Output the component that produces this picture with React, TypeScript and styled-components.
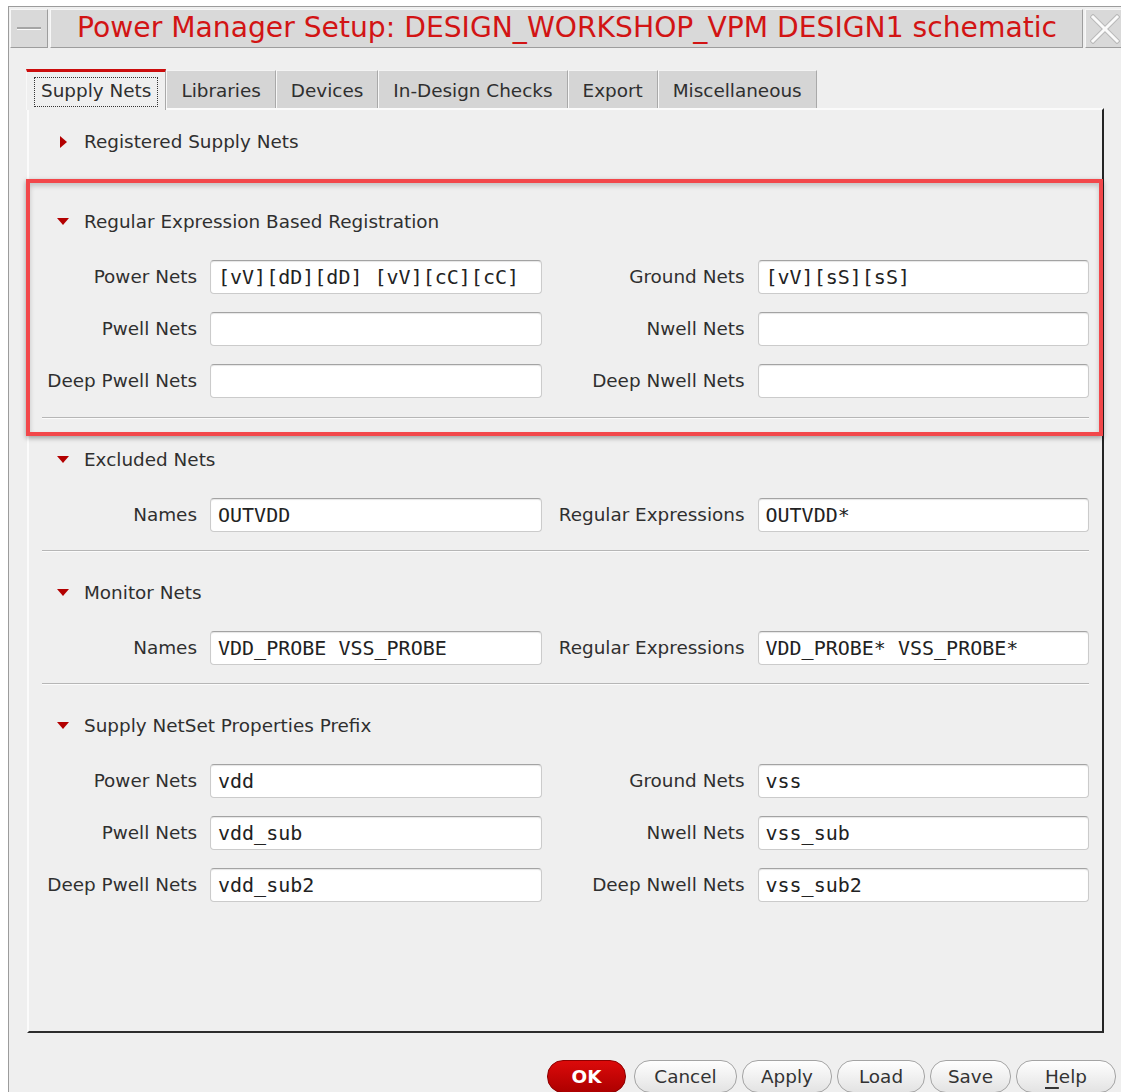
import React from 'react';
import styled, { createGlobalStyle } from 'styled-components';

const GlobalStyle = createGlobalStyle`
	html,
	body {
		margin: 0;
		padding: 0;
		background: #fff;
		overflow: hidden;
	}
	body {
		font-family: 'DejaVu Sans', 'Noto Sans', sans-serif;
	}
`;

type Field = { label: string; value: string };
type Row = [Field, Field];
type SectionData = { title: string; open: boolean; rows: Row[]; marked?: boolean };

const sections: SectionData[] = [
	{ title: 'Registered Supply Nets', open: false, rows: [] },
	{
		title: 'Regular Expression Based Registration',
		open: true,
		marked: true,
		rows: [
			[
				{ label: 'Power Nets', value: '[vV][dD][dD] [vV][cC][cC]' },
				{ label: 'Ground Nets', value: '[vV][sS][sS]' },
			],
			[
				{ label: 'Pwell Nets', value: '' },
				{ label: 'Nwell Nets', value: '' },
			],
			[
				{ label: 'Deep Pwell Nets', value: '' },
				{ label: 'Deep Nwell Nets', value: '' },
			],
		],
	},
	{
		title: 'Excluded Nets',
		open: true,
		rows: [
			[
				{ label: 'Names', value: 'OUTVDD' },
				{ label: 'Regular Expressions', value: 'OUTVDD*' },
			],
		],
	},
	{
		title: 'Monitor Nets',
		open: true,
		rows: [
			[
				{ label: 'Names', value: 'VDD_PROBE VSS_PROBE' },
				{ label: 'Regular Expressions', value: 'VDD_PROBE* VSS_PROBE*' },
			],
		],
	},
	{
		title: 'Supply NetSet Properties Prefix',
		open: true,
		rows: [
			[
				{ label: 'Power Nets', value: 'vdd' },
				{ label: 'Ground Nets', value: 'vss' },
			],
			[
				{ label: 'Pwell Nets', value: 'vdd_sub' },
				{ label: 'Nwell Nets', value: 'vss_sub' },
			],
			[
				{ label: 'Deep Pwell Nets', value: 'vdd_sub2' },
				{ label: 'Deep Nwell Nets', value: 'vss_sub2' },
			],
		],
	},
];

const tabs = ['Supply Nets', 'Libraries', 'Devices', 'In-Design Checks', 'Export', 'Miscellaneous'];

const buttons = [
	{ label: 'OK', width: 79, primary: true },
	{ label: 'Cancel', width: 103 },
	{ label: 'Apply', width: 90 },
	{ label: 'Load', width: 88 },
	{ label: 'Save', width: 81 },
	{ label: 'Help', width: 100, mnemonic: true },
];

// divider spacing below a section: none for the last, wider when it has no fields
const dividerGap = (rows: number) => (rows === 0 ? 25 : rows > 1 ? 19 : 18);

const Triangle = ({ open }: { open: boolean }) => (
	<TriangleSlot>
		{open ? (
			<svg width='12' height='8' viewBox='0 0 12 8'>
				<polygon points='0,0 12,0 6,7' fill='#b30000' />
			</svg>
		) : (
			<svg width='7' height='12' viewBox='0 0 7 12'>
				<polygon points='0,0 7,6 0,12' fill='#b30000' />
			</svg>
		)}
	</TriangleSlot>
);

const App = () => {
	return (
		<>
			<GlobalStyle />
			<Window>
				<TitleBar>
					<MinBox>
						<span />
					</MinBox>
					<TitleBox>Power Manager Setup: DESIGN_WORKSHOP_VPM DESIGN1 schematic</TitleBox>
					<CloseBox>
						<svg width='30' height='30' viewBox='0 0 30 30'>
							<g strokeLinecap='square'>
								<line x1='3' y1='3' x2='27' y2='27' stroke='#b9b9b9' strokeWidth='5' />
								<line x1='27' y1='3' x2='3' y2='27' stroke='#b9b9b9' strokeWidth='5' />
								<line x1='3' y1='3' x2='27' y2='27' stroke='#fafafa' strokeWidth='3' />
								<line x1='27' y1='3' x2='3' y2='27' stroke='#fafafa' strokeWidth='3' />
							</g>
						</svg>
					</CloseBox>
				</TitleBar>

				<TabBar>
					{tabs.map((t, i) => (
						<Tab key={t} $active={i === 0}>
							{i === 0 ? <FocusRing>{t}</FocusRing> : t}
						</Tab>
					))}
				</TabBar>

				<Panel>
					{sections.map((s, i) => (
						<Section key={s.title} $padTop={i === 0 ? 20 : 29} $marked={!!s.marked}>
							<Header>
								<Triangle open={s.open} />
								{s.title}
							</Header>
							{s.rows.length > 0 && (
								<FieldGrid>
									{s.rows.map((row) =>
										row.map((f) => (
											<React.Fragment key={f.label}>
												<Label>{f.label}</Label>
												<Entry defaultValue={f.value} spellCheck={false} />
											</React.Fragment>
										))
									)}
								</FieldGrid>
							)}
							{i < sections.length - 1 && <Divider $gap={dividerGap(s.rows.length)} />}
						</Section>
					))}
				</Panel>

				<Footer>
					{buttons.map((b) => (
						<Button key={b.label} $width={b.width} $primary={!!b.primary}>
							{b.mnemonic ? (
								<>
									<u>{b.label[0]}</u>
									{b.label.slice(1)}
								</>
							) : (
								b.label
							)}
						</Button>
					))}
				</Footer>
			</Window>
		</>
	);
};

const Window = styled.div`
	margin: 6px 0 0 8px;
	width: 1125px;
	height: 1092px;
	box-sizing: border-box;
	border-left: 1px solid #9c9c9c;
	border-top: 1px solid #9c9c9c;
	background: #efefef;
	display: flex;
	flex-direction: column;
	color: #2f2f2f;
	font-size: 18.4px;
`;

const TitleBar = styled.div`
	display: flex;
	align-items: stretch;
	height: 39px;
	padding: 2px 0 0 1px;
`;

const bevel = `
	box-sizing: border-box;
	background: #d9d9d9;
	border: 1px solid;
	border-color: #f7f7f7 #9d9d9d #9d9d9d #f7f7f7;
`;

const MinBox = styled.div`
	${bevel};
	width: 38px;
	display: flex;
	align-items: center;
	justify-content: center;

	span {
		display: block;
		width: 24px;
		height: 2px;
		background: #a5a5a5;
		border-bottom: 1px solid #fbfbfb;
	}
`;

const TitleBox = styled.div`
	${bevel};
	width: 1033px;
	margin-left: 2px;
	padding-left: 26px;
	font-size: 28.2px;
	line-height: 36px;
	color: #d21414;
	white-space: nowrap;
	overflow: hidden;
`;

const CloseBox = styled.div`
	${bevel};
	flex: 1;
	margin-left: 2px;
	padding-left: 4px;
	display: flex;
	align-items: center;
`;

const TabBar = styled.div`
	display: flex;
	align-items: flex-end;
	margin: 21px 0 0 17px;
	height: 39px;
	position: relative;
	z-index: 1;
`;

const Tab = styled.div<{ $active: boolean }>`
	box-sizing: border-box;
	height: ${(p) => (p.$active ? 41 : 38)}px;
	margin-bottom: ${(p) => (p.$active ? -2 : 0)}px;
	padding: ${(p) => (p.$active ? '5px 7px 0' : '8px 14px 0')};
	background: ${(p) => (p.$active ? '#efefef' : '#d5d5d5')};
	border-top: ${(p) => (p.$active ? '3px solid #cc0d0d' : '1px solid #f4f4f4')};
	border-left: 1px solid #f8f8f8;
	border-right: 1px solid #a9a9a9;
	white-space: nowrap;
	line-height: 24px;
	color: #2f2f2f;
`;

const FocusRing = styled.span`
	display: inline-block;
	padding: 1px 6px 3px;
	border: 1px dotted #333;
`;

const Panel = styled.div`
	box-sizing: border-box;
	margin-left: 18px;
	width: 1077px;
	height: 925px;
	background: #efefef;
	border-top: 2px solid #fbfbfb;
	border-left: 2px solid #fbfbfb;
	border-right: 2px solid #242424;
	border-bottom: 2px solid #2c2c2c;
`;

const Section = styled.section<{ $padTop: number; $marked: boolean }>`
	position: relative;
	padding: ${(p) => p.$padTop}px 13px 0;

	${(p) =>
		p.$marked &&
		`
		&::after {
			content: '';
			position: absolute;
			top: -2px;
			bottom: -17px;
			left: -3px;
			right: -1px;
			border: 4px solid #f2474a;
			box-shadow: 0 2px 5px rgba(0, 0, 0, 0.35), inset 0 3px 5px rgba(0, 0, 0, 0.18);
			pointer-events: none;
		}
	`}
`;

const Header = styled.div`
	display: flex;
	align-items: center;
	gap: 15px;
	height: 24px;
	line-height: 24px;
	padding-left: 15px;
	white-space: nowrap;
`;

const TriangleSlot = styled.span`
	width: 12px;
	display: flex;
	justify-content: center;
	align-items: center;
`;

const FieldGrid = styled.div`
	display: grid;
	grid-template-columns: 155px 1fr 190px 1fr;
	column-gap: 13px;
	row-gap: 18px;
	margin-top: 26px;
`;

const Label = styled.label`
	text-align: right;
	line-height: 34px;
	white-space: nowrap;
`;

const Entry = styled.input`
	box-sizing: border-box;
	width: 100%;
	height: 34px;
	margin: 0;
	padding: 0 7px;
	background: #fff;
	border: 1px solid #cbcbcb;
	border-top-color: #a3a3a3;
	border-radius: 4px;
	box-shadow: inset 0 1px 1px rgba(0, 0, 0, 0.1);
	font-family: 'DejaVu Sans Mono', monospace;
	font-size: 20px;
	color: #222;
	outline: none;
`;

const Divider = styled.div<{ $gap: number }>`
	margin-top: ${(p) => p.$gap}px;
	border-top: 1px solid #b6b6b6;
	border-bottom: 1px solid #fbfbfb;
`;

const Footer = styled.div`
	display: flex;
	justify-content: flex-end;
	gap: 5px;
	padding: 27px 17px 0 0;
`;

const Button = styled.div<{ $width: number; $primary: boolean }>`
	box-sizing: border-box;
	width: ${(p) => p.$width}px;
	height: 33px;
	margin-right: ${(p) => (p.$primary ? 3 : 0)}px;
	border-radius: 16px;
	display: flex;
	align-items: center;
	justify-content: center;
	border: 1px solid ${(p) => (p.$primary ? '#8d0000' : '#a4a4a4')};
	background: ${(p) =>
		p.$primary ? 'linear-gradient(#dc0a0a, #ad0000)' : 'linear-gradient(#fefefe, #e3e3e3)'};
	color: ${(p) => (p.$primary ? '#fff' : '#333')};
	font-weight: ${(p) => (p.$primary ? 700 : 400)};

	u {
		text-decoration-thickness: 2px;
		text-underline-offset: 4px;
	}
`;

export default App;
